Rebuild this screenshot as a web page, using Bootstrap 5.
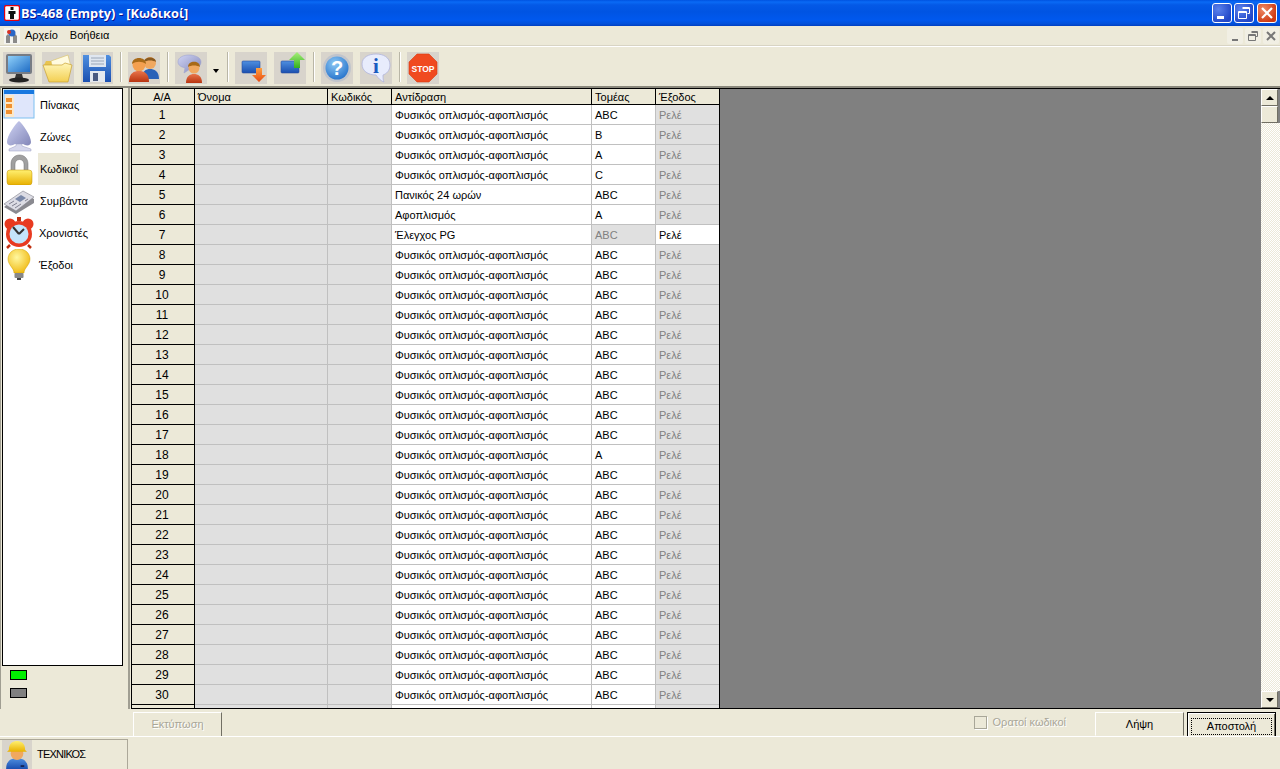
<!DOCTYPE html>
<html lang="el">
<head>
<meta charset="utf-8">
<title>BS-468 (Empty) - [Κωδικοί]</title>
<link href="https://cdn.jsdelivr.net/npm/bootstrap@5.3.0/dist/css/bootstrap.min.css" rel="stylesheet">
<style>
html,body{height:769px;overflow:hidden}
body{background:#ece9d8;font:11px/13px "Liberation Sans",Arial,sans-serif;color:#000}
.app-shell{height:769px;width:1280px}
.titlebar{height:26px;flex:none;background:linear-gradient(#0053e0 0,#0a6af5 2px,#0459e6 5px,#0054e3 12px,#0058ee 20px,#0350d8 24px,#003fc0 26px);color:#fff;font:bold 12.8px/26px "Open Sans",sans-serif;padding-left:4px;gap:1px}
.titlebar .win-title{text-shadow:1px 1px #0f1089}
.capbtn{width:20px;height:20px;border:1px solid #fff;border-radius:3px;background:radial-gradient(circle at 30% 30%,#5b82ec,#2348c8 75%);display:block}
.capbtn:first-child{margin-right:-1px}
.capbtn.closer{background:radial-gradient(circle at 30% 30%,#ee8a66,#cf3a12 75%)}
.capset{margin-left:auto;gap:3px;padding-right:3px}
.menubar{height:20px;flex:none;padding-left:4px;border-bottom:1px solid #d8d4c4}
.menu-word{margin-right:12px}
.menu-first{margin-left:5px}
.mdi{width:16px;height:16px;display:block;background:#f1efe4;border-radius:2px}
.mdiset{margin-left:auto;gap:2px;padding-right:1px}
.toolbar{height:42px;flex:none;border-top:1px solid #fff;border-bottom:2px solid #8a887c;padding:5px 0 0 3px}
.tool{width:32px;height:32px;background:#d8d4cc;display:block;flex:none}
.tool-next{margin-left:7px}
.tsep{width:2px;height:30px;flex:none;background:#b9b6a6;border-right:1px solid #fff;margin:0 6px 0 7px}
.tsep-wide{margin-left:8px}
.caret-mini{width:0;height:0;border:3px solid transparent;border-top:4px solid #000;border-bottom:0;flex:none;margin:17px 0 0 6px}
.mainrow{height:621px;flex:none}
.leftpane{width:130px;flex:none;border-right:2px solid #a09e92;border-left:1px solid #a09e92;padding-left:1px}
.navbox{width:121px;height:578px;background:#fff;border:1px solid #000}
.navitem{height:32px;flex:none}
.navitem svg{width:32px;height:32px;flex:none;display:block}
.navword{margin-left:3px;padding:0 2px;height:32px;line-height:32px}
.navword.on{background:#ece9d8;margin-left:3px}
.navword.tight{margin-left:2px}
.led{width:17px;height:10px;border:1px solid #000;margin:4px 0 4px 8px}
.led-green{background:#00f000}
.led-grey{background:#808080}
.gridarea{width:1149px;flex:none;background:#808080;border-top:1px solid #000;border-bottom:1px solid #000;border-left:1px solid #000;margin-left:1px;overflow:hidden}
.gridclip{width:588px;flex:none;overflow:hidden;height:619px;border-right:1px solid #000}
table.sheet{table-layout:fixed;width:588px;margin:0;border-collapse:separate;border-spacing:0;font-size:11px;line-height:13px}
.sheet th,.sheet td{padding:1px 0 0 3px;height:20px;border:0;border-right:1px solid #c0c0c0;border-bottom:1px solid #c0c0c0;background:#fff;color:#000;font-weight:400;box-shadow:none;white-space:nowrap;overflow:hidden;vertical-align:middle}
.sheet thead th{height:16px;background:#ece9d8;border-right:1px solid #000;border-bottom:1px solid #000}
.sheet tbody th{background:#ece9d8;border-right:1px solid #000;border-bottom:1px solid #000;text-align:center;padding:1px 2px 0 0;font-size:12px}
.sheet thead th:first-child{text-align:center;padding:1px 2px 0 0}
.sheet td.off{background:#e0e0e0;color:#808080}
.sheet td.blank{background:#e0e0e0}
.greyfield{flex:1}
.vscroll{width:19px;flex:none;overflow:hidden;background-color:#f6f4ec;background-image:repeating-conic-gradient(#ece9d8 0 25%,#fff 0 50%);background-size:2px 2px}
.sbtn{height:17px;width:17px;background:#ece9d8;border:1px solid;border-color:#fff #716f64 #716f64 #fff;flex:none;display:flex;align-items:center;justify-content:center;box-shadow:3px 0 0 #808080}
.sthumb{height:17px;width:17px;background:#ece9d8;border:1px solid;border-color:#fff #716f64 #716f64 #fff;box-shadow:3px 0 0 #808080}
.tri-up{border:4px solid transparent;border-bottom:4px solid #000;border-top:0;width:0}
.tri-down{border:4px solid transparent;border-top:4px solid #000;border-bottom:0;width:0}
.actions{height:28px;flex:none;padding:3px 4px 0 133px;border-bottom:1px solid #fff}
.xpbtn.btn{font-size:11px;line-height:13px;width:89px;height:24px;padding:0;border-radius:0;color:#000;background:#ece9d8;border:1px solid;border-color:#fff #716f64 #ece9d8 #fff;--bs-btn-disabled-opacity:1}
.xpbtn.btn:disabled{color:#a8a698;border-bottom:0;text-shadow:1px 1px #fff}
.xpbtn.btn.primary-act{border:1px solid #000;border-bottom-width:0;margin-left:3px;padding:3px 3px 0;box-shadow:inset 1px 1px #fff,inset -1px 0 #716f64}
.dotted{display:block;border:1px dotted #000;height:17px;line-height:15px}
.viewcheck{margin-left:auto;margin-right:29px;color:#a8a698;text-shadow:1px 1px #fff;margin-top:4px}
.viewcheck .form-check-input{width:13px;height:13px;margin:0 6px 0 0;border-radius:0;border:1px solid #a8a698;background:#ece9d8;opacity:1;box-shadow:1px 1px #fff}
.statusbar{height:32px;flex:none;padding-top:2px}
.statcell{width:128px;border-top:1px solid #aca899;border-right:1px solid #aca899;height:30px;padding-left:2px;font-size:11px}
.statcell svg{width:30px;height:29px;display:block;background:#d8d4cc;margin-right:5px}
.statword{letter-spacing:-.8px}
</style>
</head>
<body class="m-0">
<svg width="0" height="0" class="d-block">
<defs>
<linearGradient id="gScreen" x1="0" y1="0" x2="1" y2="1"><stop offset="0" stop-color="#8fd0fa"/><stop offset="1" stop-color="#1f6cc4"/></linearGradient>
<linearGradient id="gFolder" x1="0" y1="0" x2="0" y2="1"><stop offset="0" stop-color="#fff6b8"/><stop offset="1" stop-color="#f3cf52"/></linearGradient>
<linearGradient id="gBlue" x1="0" y1="0" x2="0" y2="1"><stop offset="0" stop-color="#4f8fe0"/><stop offset="1" stop-color="#1a4fb0"/></linearGradient>
<linearGradient id="gOrange" x1="0" y1="0" x2="0" y2="1"><stop offset="0" stop-color="#ffa040"/><stop offset="1" stop-color="#e84a10"/></linearGradient>
<linearGradient id="gGreen" x1="0" y1="0" x2="0" y2="1"><stop offset="0" stop-color="#a8f078"/><stop offset="1" stop-color="#34b020"/></linearGradient>
<linearGradient id="gRed" x1="0" y1="0" x2="0" y2="1"><stop offset="0" stop-color="#e8744a"/><stop offset="1" stop-color="#b83410"/></linearGradient>
<linearGradient id="gLav" x1="0" y1="0" x2="1" y2="1"><stop offset="0" stop-color="#d0d4f4"/><stop offset="1" stop-color="#8286b8"/></linearGradient>
<linearGradient id="gYel" x1="0" y1="0" x2="0" y2="1"><stop offset="0" stop-color="#fff070"/><stop offset="1" stop-color="#e8b000"/></linearGradient>
<radialGradient id="gHelp" cx=".4" cy=".3" r=".8"><stop offset="0" stop-color="#8cc8f4"/><stop offset="1" stop-color="#1e6cc8"/></radialGradient>
<radialGradient id="gBulb" cx=".4" cy=".35" r=".7"><stop offset="0" stop-color="#fff8a0"/><stop offset="1" stop-color="#f0b810"/></radialGradient>
</defs>
</svg>
<div class="app-shell d-flex flex-column">
  <div class="titlebar d-flex align-items-center">
    <svg width="16" height="16" viewBox="0 0 16 16" class="d-block flex-none"><rect x=".5" y=".5" width="15" height="15" rx="2" fill="#fff" stroke="#e00010" stroke-width="1.4"/><rect x="6.500" y="2" width="3" height="3" fill="#111"/><path d="M4.500 6h7v3h-1.500v5h-4v-5h-1.500z" fill="#111"/></svg>
    <span class="win-title">BS-468 (Empty) - [Κωδικοί]</span>
    <div class="capset d-flex">
      <span class="capbtn"><svg width="18" height="18" viewBox="0 0 18 18" class="d-block"><rect x="4" y="12" width="7" height="3" fill="#fff"/></svg></span>
      <span class="capbtn"><svg width="18" height="18" viewBox="0 0 18 18" class="d-block"><path d="M7.500 3.500h7v6h-2M3.500 7.500h8v7h-8z M3.500 8.500h8 M7.500 4.500h7" fill="none" stroke="#fff"/></svg></span>
      <span class="capbtn closer"><svg width="18" height="18" viewBox="0 0 18 18" class="d-block"><path d="M4 4l10 10M14 4L4 14" stroke="#fff" stroke-width="2.200"/></svg></span>
    </div>
  </div>
  <div class="menubar d-flex align-items-center">
    <svg width="16" height="16" viewBox="0 0 16 16" class="d-block"><rect width="16" height="16" fill="#f4f4f0"/><path d="M2 15V8l2-2 2 2v7M9 15V8l2-2 2 2v7" fill="#8a8a8a"/><circle cx="8" cy="5" r="3.500" fill="#2a66c8"/><circle cx="5" cy="4" r="2" fill="#d83020"/></svg>
    <span class="menu-word menu-first">Αρχείο</span><span class="menu-word">Βοήθεια</span>
    <div class="mdiset d-flex">
      <span class="mdi"><svg width="16" height="16" viewBox="0 0 16 16" class="d-block"><rect x="5" y="11" width="6" height="2" fill="#777"/></svg></span>
      <span class="mdi"><svg width="16" height="16" viewBox="0 0 16 16" class="d-block"><path d="M6.500 3.500h6v5h-2M3.500 6.500h7v6h-7zM3.500 7.500h7M6.500 4.500h6" fill="none" stroke="#777"/></svg></span>
      <span class="mdi"><svg width="16" height="16" viewBox="0 0 16 16" class="d-block"><path d="M4 4l8 8M12 4l-8 8" stroke="#777" stroke-width="2"/></svg></span>
    </div>
  </div>
  <div class="toolbar d-flex align-items-start">
    <svg class="tool" viewBox="0 0 32 32"><rect x="3" y="2" width="26" height="20" rx="2" fill="#777c84"/><rect x="5" y="4" width="22" height="16" fill="url(#gScreen)"/><path d="M13 22h6l1 4h-8z" fill="#333"/><ellipse cx="16" cy="28" rx="10" ry="2.500" fill="#222"/></svg>
    <svg class="tool tool-next" viewBox="0 0 32 32"><path d="M2 13l2-4h8l2-2h10l3 4v4H7z" fill="#e8c450"/><path d="M9 9l17-6 3 12-17 8z" fill="#fffbe0" stroke="#d8c060" stroke-width=".6"/><path d="M1 13h19l3-2 7 2-4 17H7z" fill="url(#gFolder)" stroke="#c8a030" stroke-width=".7"/></svg>
    <svg class="tool tool-next" viewBox="0 0 32 32"><path d="M2 3h26l2 2v25H2z" fill="url(#gBlue)"/><rect x="8" y="3" width="17" height="12" fill="#dfe6f0"/><path d="M10 6h13M10 9h13M10 12h13" stroke="#9aa6b8"/><rect x="9" y="19" width="15" height="11" fill="#e4e8ee"/><rect x="12" y="21" width="5" height="8" fill="#4a5a80"/></svg>
    <span class="tsep"></span>
    <svg class="tool" viewBox="0 0 32 32"><circle cx="22" cy="11" r="6" fill="#f0a860"/><path d="M16 10c0-6 12-6 12 0-3-2-9-2-12 0z" fill="#8a5a20"/><path d="M14 27c0-8 4-10 8-10s9 2 9 10z" fill="#2a62b8"/><circle cx="11" cy="13" r="6.500" fill="#f4a050"/><path d="M4 12c0-8 14-8 14 0-4-3-10-3-14 0z" fill="#a86a18"/><path d="M1 30c0-9 5-11 10-11s10 2 10 11z" fill="url(#gRed)"/></svg>
    <span class="tsep"></span>
    <svg class="tool" viewBox="0 0 32 32"><path d="M3 10c0-5 6-7 11-7s12 2 12 7-6 7-11 7l-6 4 1-5c-4-1-7-3-7-6z" fill="url(#gLav)" stroke="#a0a4d0" stroke-width=".6"/><circle cx="19" cy="16" r="5.500" fill="#f0a860"/><path d="M13 15c0-7 12-7 12 0-3-2-9-2-12 0z" fill="#a86a18"/><path d="M11 31c0-7 4-9 8-9s8 2 8 9z" fill="url(#gRed)"/></svg>
    <span class="caret-mini"></span>
    <span class="tsep tsep-wide"></span>
    <svg class="tool" viewBox="0 0 32 32"><rect x="7" y="9" width="18" height="12" rx="1" fill="url(#gBlue)" stroke="#2a4fa0" stroke-width=".6"/><path d="M21 16h6v7h4l-7 7-7-7h4z" fill="url(#gOrange)"/></svg>
    <svg class="tool tool-next" viewBox="0 0 32 32"><rect x="7" y="9" width="18" height="12" rx="1" fill="url(#gBlue)" stroke="#2a4fa0" stroke-width=".6"/><path d="M20 16V8h-5l8-8 8 8h-5v8z" fill="url(#gGreen)"/></svg>
    <span class="tsep"></span>
    <svg class="tool" viewBox="0 0 32 32"><circle cx="16" cy="16" r="14" fill="#c0c4cc"/><circle cx="16" cy="16" r="11.500" fill="url(#gHelp)"/><text x="16" y="23" text-anchor="middle" font-family="Liberation Sans" font-weight="700" font-size="20" fill="#fff">?</text></svg>
    <svg class="tool tool-next" viewBox="0 0 32 32"><path d="M2 12C2 5 9 2 16 2s14 3 14 11c0 6-4 9-7 10 0 3 0 5 1 7-3-1-6-4-8-7C8 23 2 19 2 12z" fill="#e8ecfc" stroke="#b0b4dc" stroke-width=".8"/><text x="16" y="21" text-anchor="middle" font-family="Liberation Serif" font-weight="700" font-size="21" fill="#1a5cc0">i</text></svg>
    <span class="tsep"></span>
    <svg class="tool" viewBox="0 0 32 32"><path d="M10 2h12l8 8v12l-8 8H10l-8-8V10z" fill="#f04a20" stroke="#d83a10" stroke-width=".6"/><text x="16" y="20" text-anchor="middle" font-family="Liberation Sans" font-weight="700" font-size="8.500" fill="#fff">STOP</text></svg>
  </div>
  <div class="mainrow d-flex">
    <div class="leftpane d-flex flex-column">
      <div class="navbox d-flex flex-column">
        <div class="navitem d-flex align-items-center"><svg viewBox="0 0 32 32"><rect x="1" y="1" width="30" height="28" fill="#dfe6fb" stroke="#7cc0f0"/><rect x="1" y="1" width="30" height="4" fill="#1878e0"/><rect x="2" y="6" width="9" height="22" fill="#fce8c8"/><rect x="3" y="9" width="6" height="4" fill="#f09030"/><rect x="3" y="15" width="6" height="4" fill="#f09030"/><rect x="3" y="21" width="6" height="4" fill="#f09030"/></svg><span class="navword">Πίνακας</span></div>
        <div class="navitem d-flex align-items-center"><svg viewBox="0 0 32 32"><path d="M16 0C12 3 4 15 4 21c0 3 3 4 6 3l2-1h8l2 1c3 1 6 0 6-3C28 15 20 3 16 0z" fill="url(#gLav)"/><path d="M13 23h6v2l9 3v2H6v-2l7-3z" fill="#d4d6ec" stroke="#9a9cc0" stroke-width=".5"/></svg><span class="navword">Ζώνες</span></div>
        <div class="navitem d-flex align-items-center"><svg viewBox="0 0 32 32"><path d="M8 18V11c0-12 17-12 17 0v7h-4v-7c0-6-9-6-9 0v7z" fill="#a0a0a0" stroke="#707070" stroke-width=".5"/><rect x="4" y="17" width="25" height="15" rx="3" fill="url(#gYel)" stroke="#c09000" stroke-width=".5"/></svg><span class="navword on">Κωδικοί</span></div>
        <div class="navitem d-flex align-items-center"><svg viewBox="0 0 32 32"><path d="M1 22L20 8l11 6v4L13 29z" fill="#8a8a90"/><path d="M1 19L20 6l11 6L13 26z" fill="#dcdce4" stroke="#80808a" stroke-width=".6"/><path d="M12 14l6-4 5 3-6 4z" fill="#7a88a8"/><path d="M6 19l5-3M9 21l5-3M12 23l6-4M22 16l3-2" stroke="#808090"/></svg><span class="navword">Συμβάντα</span></div>
        <div class="navitem d-flex align-items-center"><svg viewBox="0 0 32 32"><circle cx="7" cy="7" r="5.500" fill="#e83a20"/><circle cx="25" cy="7" r="5.500" fill="#e83a20"/><rect x="14" y="0" width="4" height="4" fill="#c03010"/><circle cx="16" cy="17" r="13" fill="#e83a20"/><circle cx="16" cy="17" r="9.500" fill="#c4e4fa"/><path d="M16 17L10 10M16 17l5-5" stroke="#333" stroke-width="2"/><path d="M7 28l-3 3M25 28l3 3" stroke="#c03010" stroke-width="2.500"/></svg><span class="navword tight">Χρονιστές</span></div>
        <div class="navitem d-flex align-items-center"><svg viewBox="0 0 32 32"><path d="M16 0c-7 0-11 5-11 10 0 6 6 9 6 14h10c0-5 6-8 6-14 0-5-4-10-11-10z" fill="url(#gBulb)" stroke="#d0a000" stroke-width=".5"/><rect x="11.500" y="24" width="9" height="5" rx="1" fill="#888"/><path d="M14 29h4v2h-4z" fill="#444"/></svg><span class="navword tight">Έξοδοι</span></div>
      </div>
      <div class="led led-green"></div>
      <div class="led led-grey"></div>
    </div>
    <div class="gridarea d-flex">
      <div class="gridclip">
        <table class="table sheet">
          <colgroup><col style="width:63px"><col style="width:133px"><col style="width:64px"><col style="width:200px"><col style="width:64px"><col style="width:64px"></colgroup>
          <thead><tr><th>Α/Α</th><th>Όνομα</th><th>Κωδικός</th><th>Αντίδραση</th><th>Τομέας</th><th>Έξοδος</th></tr></thead>
          <tbody>
<tr><th>1</th><td class="blank"></td><td class="blank"></td><td>Φυσικός οπλισμός-αφοπλισμός</td><td>ABC</td><td class="off">Ρελέ</td></tr>
<tr><th>2</th><td class="blank"></td><td class="blank"></td><td>Φυσικός οπλισμός-αφοπλισμός</td><td>B</td><td class="off">Ρελέ</td></tr>
<tr><th>3</th><td class="blank"></td><td class="blank"></td><td>Φυσικός οπλισμός-αφοπλισμός</td><td>A</td><td class="off">Ρελέ</td></tr>
<tr><th>4</th><td class="blank"></td><td class="blank"></td><td>Φυσικός οπλισμός-αφοπλισμός</td><td>C</td><td class="off">Ρελέ</td></tr>
<tr><th>5</th><td class="blank"></td><td class="blank"></td><td>Πανικός 24 ωρών</td><td>ABC</td><td class="off">Ρελέ</td></tr>
<tr><th>6</th><td class="blank"></td><td class="blank"></td><td>Αφοπλισμός</td><td>A</td><td class="off">Ρελέ</td></tr>
<tr><th>7</th><td class="blank"></td><td class="blank"></td><td>Έλεγχος PG</td><td class="off">ABC</td><td>Ρελέ</td></tr>
<tr><th>8</th><td class="blank"></td><td class="blank"></td><td>Φυσικός οπλισμός-αφοπλισμός</td><td>ABC</td><td class="off">Ρελέ</td></tr>
<tr><th>9</th><td class="blank"></td><td class="blank"></td><td>Φυσικός οπλισμός-αφοπλισμός</td><td>ABC</td><td class="off">Ρελέ</td></tr>
<tr><th>10</th><td class="blank"></td><td class="blank"></td><td>Φυσικός οπλισμός-αφοπλισμός</td><td>ABC</td><td class="off">Ρελέ</td></tr>
<tr><th>11</th><td class="blank"></td><td class="blank"></td><td>Φυσικός οπλισμός-αφοπλισμός</td><td>ABC</td><td class="off">Ρελέ</td></tr>
<tr><th>12</th><td class="blank"></td><td class="blank"></td><td>Φυσικός οπλισμός-αφοπλισμός</td><td>ABC</td><td class="off">Ρελέ</td></tr>
<tr><th>13</th><td class="blank"></td><td class="blank"></td><td>Φυσικός οπλισμός-αφοπλισμός</td><td>ABC</td><td class="off">Ρελέ</td></tr>
<tr><th>14</th><td class="blank"></td><td class="blank"></td><td>Φυσικός οπλισμός-αφοπλισμός</td><td>ABC</td><td class="off">Ρελέ</td></tr>
<tr><th>15</th><td class="blank"></td><td class="blank"></td><td>Φυσικός οπλισμός-αφοπλισμός</td><td>ABC</td><td class="off">Ρελέ</td></tr>
<tr><th>16</th><td class="blank"></td><td class="blank"></td><td>Φυσικός οπλισμός-αφοπλισμός</td><td>ABC</td><td class="off">Ρελέ</td></tr>
<tr><th>17</th><td class="blank"></td><td class="blank"></td><td>Φυσικός οπλισμός-αφοπλισμός</td><td>ABC</td><td class="off">Ρελέ</td></tr>
<tr><th>18</th><td class="blank"></td><td class="blank"></td><td>Φυσικός οπλισμός-αφοπλισμός</td><td>A</td><td class="off">Ρελέ</td></tr>
<tr><th>19</th><td class="blank"></td><td class="blank"></td><td>Φυσικός οπλισμός-αφοπλισμός</td><td>ABC</td><td class="off">Ρελέ</td></tr>
<tr><th>20</th><td class="blank"></td><td class="blank"></td><td>Φυσικός οπλισμός-αφοπλισμός</td><td>ABC</td><td class="off">Ρελέ</td></tr>
<tr><th>21</th><td class="blank"></td><td class="blank"></td><td>Φυσικός οπλισμός-αφοπλισμός</td><td>ABC</td><td class="off">Ρελέ</td></tr>
<tr><th>22</th><td class="blank"></td><td class="blank"></td><td>Φυσικός οπλισμός-αφοπλισμός</td><td>ABC</td><td class="off">Ρελέ</td></tr>
<tr><th>23</th><td class="blank"></td><td class="blank"></td><td>Φυσικός οπλισμός-αφοπλισμός</td><td>ABC</td><td class="off">Ρελέ</td></tr>
<tr><th>24</th><td class="blank"></td><td class="blank"></td><td>Φυσικός οπλισμός-αφοπλισμός</td><td>ABC</td><td class="off">Ρελέ</td></tr>
<tr><th>25</th><td class="blank"></td><td class="blank"></td><td>Φυσικός οπλισμός-αφοπλισμός</td><td>ABC</td><td class="off">Ρελέ</td></tr>
<tr><th>26</th><td class="blank"></td><td class="blank"></td><td>Φυσικός οπλισμός-αφοπλισμός</td><td>ABC</td><td class="off">Ρελέ</td></tr>
<tr><th>27</th><td class="blank"></td><td class="blank"></td><td>Φυσικός οπλισμός-αφοπλισμός</td><td>ABC</td><td class="off">Ρελέ</td></tr>
<tr><th>28</th><td class="blank"></td><td class="blank"></td><td>Φυσικός οπλισμός-αφοπλισμός</td><td>ABC</td><td class="off">Ρελέ</td></tr>
<tr><th>29</th><td class="blank"></td><td class="blank"></td><td>Φυσικός οπλισμός-αφοπλισμός</td><td>ABC</td><td class="off">Ρελέ</td></tr>
<tr><th>30</th><td class="blank"></td><td class="blank"></td><td>Φυσικός οπλισμός-αφοπλισμός</td><td>ABC</td><td class="off">Ρελέ</td></tr>
<tr><th></th><td class="blank"></td><td class="blank"></td><td></td><td></td><td class="off"></td></tr>
          </tbody>
        </table>
      </div>
      <div class="greyfield"></div>
      <div class="vscroll d-flex flex-column">
        <div class="sbtn"><span class="tri-up"></span></div>
        <div class="sthumb"></div>
        <div class="sbtn mt-auto"><span class="tri-down"></span></div>
      </div>
    </div>
  </div>
  <div class="actions d-flex align-items-start">
    <button class="btn xpbtn" type="button" disabled>Εκτύπωση</button>
    <label class="viewcheck d-flex align-items-center"><input class="form-check-input" type="checkbox" disabled>Ορατοί κωδικοί</label>
    <button class="btn xpbtn" type="button">Λήψη</button>
    <button class="btn xpbtn primary-act" type="button"><span class="dotted">Αποστολή</span></button>
  </div>
  <div class="statusbar d-flex">
    <div class="statcell d-flex align-items-center">
      <svg viewBox="0 0 32 32"><path d="M4 32c0-9 5-12 12-12s12 3 12 12z" fill="url(#gBlue)"/><circle cx="16" cy="15" r="7" fill="#f0a860"/><path d="M7 11C7 3 12 1 16 1s9 2 9 10l2 2H5z" fill="url(#gYel)"/><rect x="20" y="28" width="4" height="1.500" fill="#113"/></svg>
      <span class="statword">ΤΕΧΝΙΚΟΣ</span>
    </div>
  </div>
</div>
</body>
</html>
